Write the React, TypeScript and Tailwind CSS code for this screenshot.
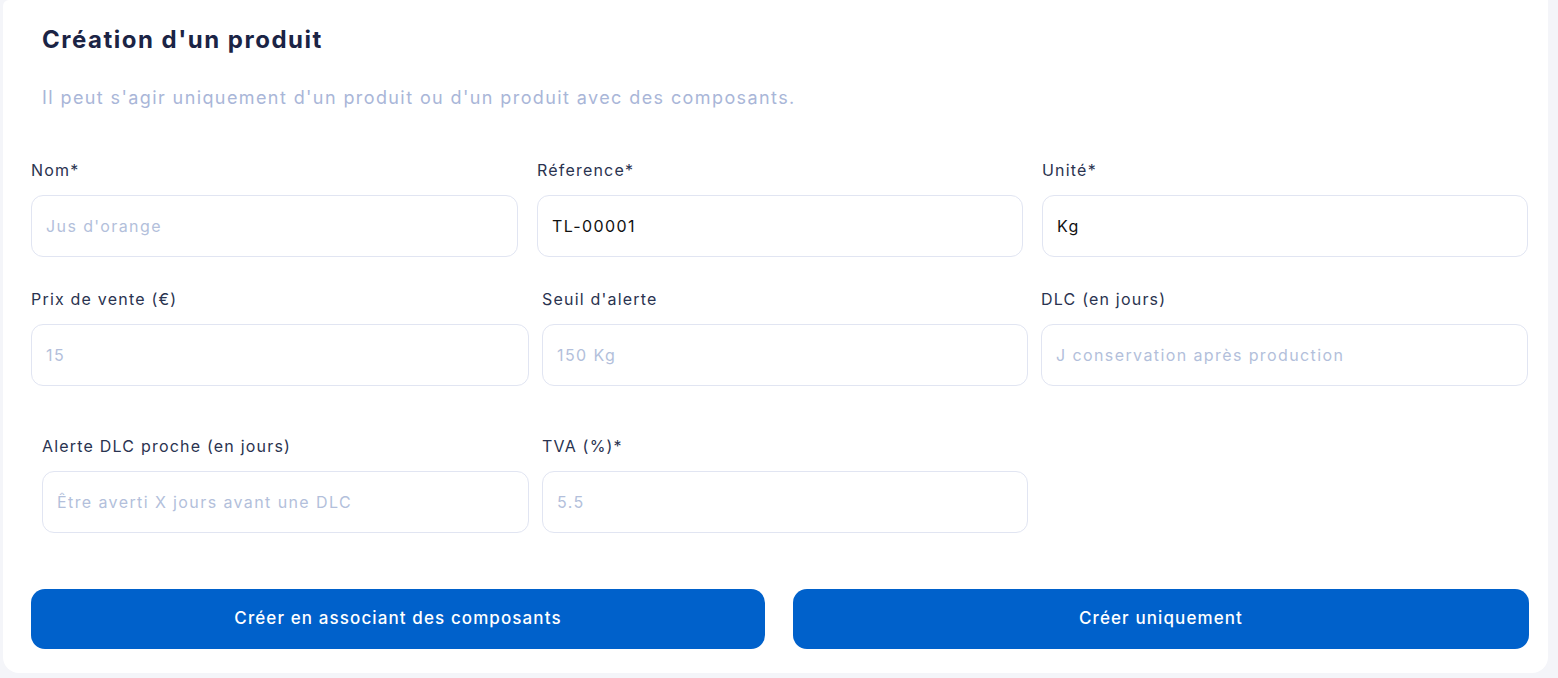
const font = { fontFamily: "Inter, 'Noto Sans', sans-serif" };

type FieldProps = {
  label: string;
  placeholder?: string;
  value?: string;
  className?: string;
};

const Field = ({ label, placeholder, value, className }: FieldProps) => (
  <div className={className}>
    <div className="text-[16px] leading-5 tracking-[1.2px] text-[#2a3350] mb-[15px]">{label}</div>
    <input
      readOnly
      defaultValue={value}
      placeholder={placeholder}
      className="w-full h-[62px] rounded-[12px] border border-[#e1e5f2] bg-white px-[14px] text-[16px] tracking-[1.4px] text-[#111] placeholder:text-[#b3bfdb] outline-none"
      style={font}
    />
  </div>
);

export default function App() {
  return (
    <div className="w-[1558px] h-[678px] bg-[#f4f5f9] overflow-hidden" style={font}>
      <div className="ml-[3px] w-[1545px] h-[673px] bg-white rounded-b-2xl rounded-tl-md pt-[24px]">
        <h1 className="ml-[39px] text-[24px] leading-8 font-bold tracking-[1.5px] text-[#1b2445]">
          Création d'un produit
        </h1>
        <p className="ml-[39px] mt-[30px] text-[18px] leading-6 tracking-[1.4px] text-[#a9b6d8]">
          Il peut s'agir uniquement d'un produit ou d'un produit avec des composants.
        </p>

        {/* ligne 1 */}
        <div className="mt-[50px] flex gap-[19px] pl-[28px]">
          <Field className="w-[487px]" label="Nom*" placeholder="Jus d'orange" />
          <Field className="w-[486px]" label="Réference*" value="TL-00001" />
          <Field className="w-[486px]" label="Unité*" value="Kg" />
        </div>

        {/* ligne 2 */}
        <div className="mt-[32px] flex gap-[13px] pl-[28px]">
          <Field className="w-[498px]" label="Prix de vente (€)" placeholder="15" />
          <Field className="w-[486px]" label="Seuil d'alerte" placeholder="150 Kg" />
          <Field className="w-[487px]" label="DLC (en jours)" placeholder="J conservation après production" />
        </div>

        {/* ligne 3 */}
        <div className="mt-[50px] flex gap-[13px] pl-[39px]">
          <Field className="w-[487px]" label="Alerte DLC proche (en jours)" placeholder="Être averti X jours avant une DLC" />
          <Field className="w-[486px]" label="TVA (%)*" placeholder="5.5" />
        </div>

        {/* boutons */}
        <div className="mt-[56px] flex gap-[28px] pl-[28px]">
          <button className="w-[734px] h-[60px] rounded-[14px] bg-[#0061cb] text-white text-[17px] font-medium tracking-[1.1px]">
            Créer en associant des composants
          </button>
          <button className="w-[736px] h-[60px] rounded-[14px] bg-[#0061cb] text-white text-[17px] font-medium tracking-[1.1px]">
            Créer uniquement
          </button>
        </div>
      </div>
    </div>
  );
}
